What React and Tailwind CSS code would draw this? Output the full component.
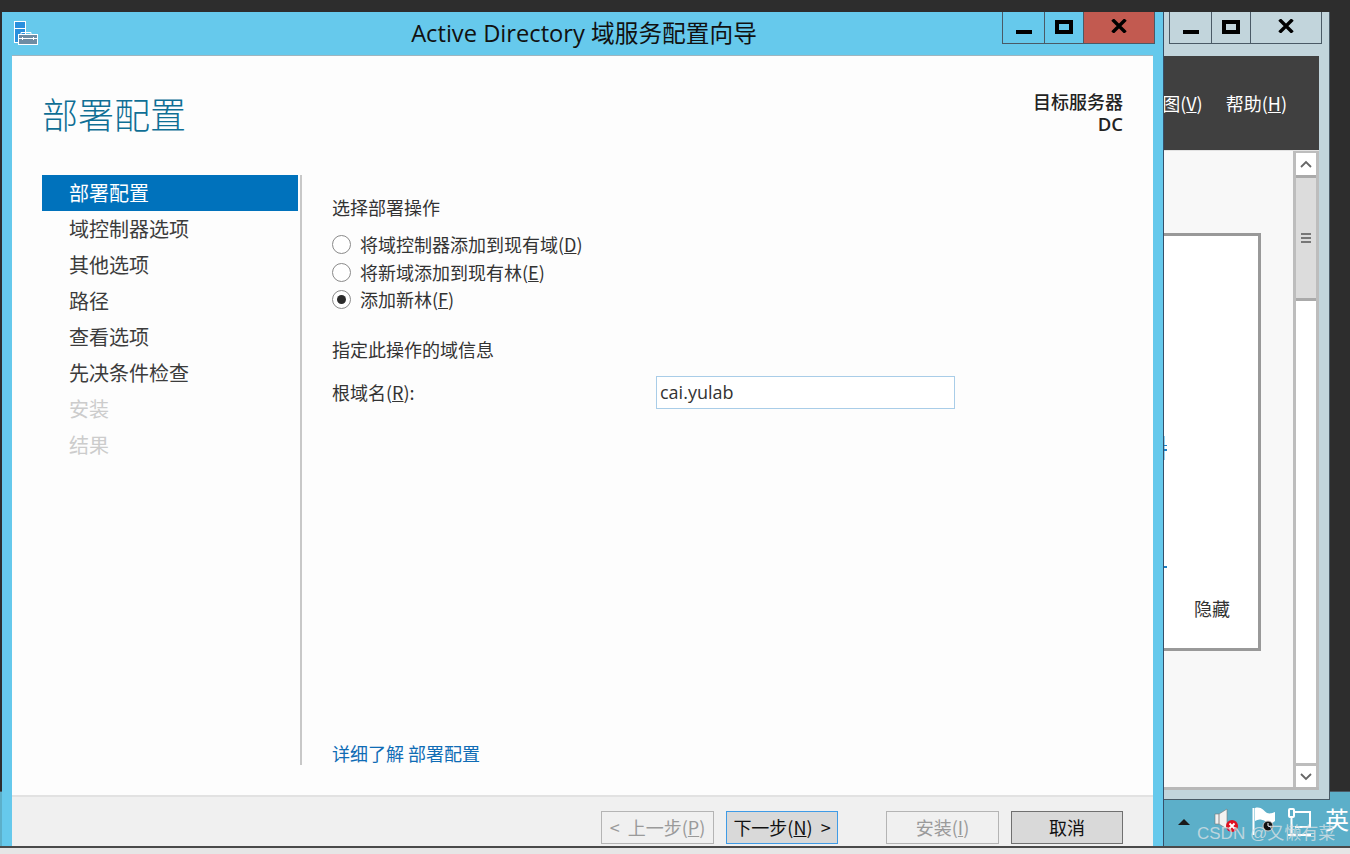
import React from 'react';

const cn = '"Noto Sans CJK SC", "Noto Sans", sans-serif';

const navItems = [
  { name: '部署配置', state: 'active' },
  { name: '域控制器选项' },
  { name: '其他选项' },
  { name: '路径' },
  { name: '查看选项' },
  { name: '先决条件检查' },
  { name: '安装', state: 'off' },
  { name: '结果', state: 'off' },
];

// Minimise / maximise / close glyphs of the server caption buttons
function CaptionButtons({ closeClass }) {
  return (
    <div className="flex h-[32px] border border-t-0 border-[#4a5a66]">
      <div className="w-[42px] flex items-end justify-center pb-[9px] border-r border-[#4a5a66]">
        <div className="w-[16px] h-[4px] bg-black" />
      </div>
      <div className="w-[39px] flex items-start justify-center pt-[8px] border-r border-[#4a5a66]">
        <div className="w-[18px] h-[14px] border-[4px] border-black" />
      </div>
      <div className={`w-[70px] flex items-center justify-center pb-[3px] ${closeClass}`}>
        <svg width="16" height="14" viewBox="0 0 16 14">
          <path d="M1.5 0.5 L14.5 13.5 M14.5 0.5 L1.5 13.5" stroke="#000" strokeWidth="3.4" />
        </svg>
      </div>
    </div>
  );
}

function Radio({ checked, children }) {
  return (
    <div className="h-[27.5px] flex items-center gap-[9px]">
      <div className="w-[19px] h-[19px] rounded-full border border-[#8a8a8a] bg-white flex items-center justify-center">
        {checked && <div className="w-[9px] h-[9px] rounded-full bg-[#2b2b2b]" />}
      </div>
      <span>{children}</span>
    </div>
  );
}

function WizButton({ children, className }) {
  return (
    <button className={`h-[33px] border flex items-center justify-center text-[18px] whitespace-pre ${className}`}>
      {children}
    </button>
  );
}

export default function App() {
  return (
    <div className="relative w-[1350px] h-[854px] bg-[#2d2d2d] overflow-hidden" style={{ fontFamily: cn }}>
      {/* taskbar behind the windows */}
      <div className="absolute left-0 top-[791px] w-[1350px] h-[56px] bg-[#5cafc9] border-t border-[#4a5a66]">
        <div className="absolute left-[1178px] top-[27px] w-0 h-0 border-l-[6px] border-r-[6px] border-b-[6px] border-l-transparent border-r-transparent border-b-[#1a1a1a]" />
        <svg className="absolute left-[1213px] top-[15px]" width="28" height="28" viewBox="0 0 28 28">
          <path d="M2 7 H6 L14 2 V22 L6 17 H2 Z" fill="#f2f2f2" stroke="#777" strokeWidth="0.6" />
          <path d="M6 7 V17" stroke="#888" strokeWidth="1" />
          <circle cx="19" cy="19" r="6" fill="#e01020" />
          <path d="M16.500 16.500 L21.500 21.500 M21.500 16.500 L16.500 21.500" stroke="#fff" strokeWidth="1.8" />
        </svg>
        <svg className="absolute left-[1251px] top-[14px]" width="28" height="30" viewBox="0 0 28 30">
          <path d="M2.500 2 V29" stroke="#fff" strokeWidth="2" />
          <path d="M4 2 C10 0 13 5 16 7 C19 8 21 7 24 6 V15 C20 19 17 17 14 15 C10 13 7 13 4 15 Z" fill="#fff" />
          <circle cx="17" cy="20" r="5" fill="#111" stroke="#ccc" />
          <path d="M17 17 V20 L20 21" stroke="#fff" strokeWidth="1" fill="none" />
        </svg>
        <svg className="absolute left-[1287px] top-[15px]" width="26" height="30" viewBox="0 0 26 30">
          <rect x="2" y="2" width="5" height="8" rx="1" fill="none" stroke="#fff" strokeWidth="2" />
          <path d="M4.500 10 V26 M1 28 H9" stroke="#fff" strokeWidth="2" />
          <path d="M8 5 H23 V20 H8" fill="none" stroke="#fff" strokeWidth="2" />
          <path d="M11 28 H24" stroke="#fff" strokeWidth="2" />
        </svg>
        <span className="absolute left-[1325px] top-[13px] text-[24px] leading-[28px] text-white">英</span>
      </div>

      {/* back window (server manager) */}
      <div className="absolute left-[1150px] top-[12px] w-[180px] h-[788px] bg-[#c2d5dc] border-r border-b border-[#4a5a66] flex flex-col items-end pr-[10px] pb-[9px]">
        <div className="mr-[-3px]">
          <CaptionButtons closeClass="" />
        </div>
        <div className="mt-[12px] w-full flex-1 flex flex-col pl-[14px]">
          <div className="h-[94px] bg-[#404040] flex items-center justify-end text-[18px] text-white pr-[32px] gap-[23px] whitespace-nowrap">
            <span>视图(<u>V</u>)</span>
            <span>帮助(<u>H</u>)</span>
          </div>
          <div className="flex-1 flex bg-[#f8f8f8] border-t border-[#e2e2e2] border-b-[3px] border-b-[#b8b8b8]">
            <div className="flex-1 pt-[82px]">
              <div className="ml-[-14px] w-[111px] h-[418px] bg-white border-[3px] border-[#999999] border-l-0 flex items-end justify-end pr-[28px] pb-[28px] text-[18px] leading-[24px] text-[#333333] whitespace-nowrap">
                隐藏
              </div>
            </div>
            <div className="w-[26px] flex flex-col border-x-[3px] border-t-2 border-[#bdbdbd] bg-white">
              <div className="h-[25px] flex items-center justify-center border-b-[3px] border-[#aaaaaa]">
                <svg width="12" height="8" viewBox="0 0 12 8"><path d="M1 7 L6 2 L11 7" fill="none" stroke="#666" strokeWidth="1.800" /></svg>
              </div>
              <div className="h-[123px] bg-[#dcdcdc] border-b-[3px] border-[#aaaaaa] flex flex-col items-center justify-center gap-[2px]">
                <div className="w-[10px] h-[2px] bg-[#777]" />
                <div className="w-[10px] h-[2px] bg-[#777]" />
                <div className="w-[10px] h-[2px] bg-[#777]" />
              </div>
              <div className="flex-1" />
              <div className="h-[24px] flex items-center justify-center border-t-[3px] border-[#bdbdbd]">
                <svg width="12" height="8" viewBox="0 0 12 8"><path d="M1 1 L6 6 L11 1" fill="none" stroke="#666" strokeWidth="1.800" /></svg>
              </div>
            </div>
          </div>
        </div>
      </div>

      {/* bits of blue link text that stick out from under the dialog */}
      <div className="absolute left-[1164px] top-[436px] w-[1px] h-[24px] bg-[#8fd0f0]" />
      <div className="absolute left-[1164px] top-[445px] w-[3px] h-[1px] bg-[#1a7fc4]" />
      <div className="absolute left-[1164px] top-[449px] w-[3px] h-[2px] bg-[#1a7fc4]" />
      <div className="absolute left-[1164px] top-[566px] w-[3px] h-[2px] bg-[#1a7fc4]" />

      {/* dialog */}
      <div className="absolute left-[2px] top-[12px] w-[1162px] h-[835px] bg-[#66c9ec] border-r border-[#35506a] flex flex-col">
        <div className="relative h-[43px] shrink-0 flex items-start">
          <svg className="absolute left-[12px] top-[8px]" width="26" height="26" viewBox="0 0 26 26">
            <rect x="0.500" y="1.500" width="11" height="21" fill="#2a90dd" stroke="#fff" />
            <path d="M1 8.500 H11" stroke="#fff" />
            <rect x="4.500" y="14.500" width="19" height="10" fill="#6e8ca3" stroke="#fff" />
            <path d="M7 14 V12.500 H17 V14" fill="none" stroke="#fff" />
            <path d="M5 18.500 H23 M8.500 17 V20 M19.500 17 V20" stroke="#fff" />
          </svg>
          <div className="flex-1 text-center text-[23.7px] leading-[42px] text-[#111] pl-[3px] whitespace-nowrap" style={{ fontFamily: '"Open Sans", "Noto Sans CJK SC", sans-serif' }}>
            Active Directory 域服务配置向导
          </div>
          <div className="absolute right-[8px] top-0">
            <CaptionButtons closeClass="bg-[#c25a50]" />
          </div>
        </div>

        <div className="mx-[10px] flex-1 bg-[#fdfdfd] border-t border-[#9fb5bf] flex flex-col">
          {/* heading */}
          <div className="h-[119px] shrink-0 flex justify-between px-[30px] pt-[34px]">
            <div className="text-[36px] leading-[46px] font-light text-[#0f6f95]">部署配置</div>
            <div className="text-right text-[18px] leading-[22px] font-medium text-[#222]">
              <div>目标服务器</div>
              <div className="font-semibold text-[18.500px] mt-[1px]" style={{ fontFamily: '"Open Sans", sans-serif' }}>DC</div>
            </div>
          </div>

          <div className="flex-1 flex pl-[30px] pb-[30px]">
            {/* steps */}
            <div className="w-[260px] border-r-2 border-[#c8c8c8] text-[20px]">
              {navItems.map((item) => (
                <div
                  key={item.name}
                  className={`h-[36px] leading-[36px] pl-[27px] ${
                    item.state === 'active'
                      ? 'bg-[#0072bc] text-white mr-[2px]'
                      : item.state === 'off'
                      ? 'text-[#cccccc]'
                      : 'text-[#3c3c3c]'
                  }`}
                >
                  {item.name}
                </div>
              ))}
            </div>

            {/* form */}
            <div className="flex-1 flex flex-col pl-[30px] pt-[20px] text-[18px] text-[#333333]">
              <div className="h-[24px] leading-[24px]">选择部署操作</div>
              <div className="mt-[12px]">
                <Radio>将域控制器添加到现有域(<u>D</u>)</Radio>
                <Radio>将新域添加到现有林(<u>E</u>)</Radio>
                <Radio checked>添加新林(<u>F</u>)</Radio>
              </div>
              <div className="mt-[23px] h-[24px] leading-[24px]">指定此操作的域信息</div>
              <div className="mt-[15.500px] flex items-center h-[33px]">
                <span className="w-[324px]">根域名(<u>R</u>):</span>
                <div className="w-[299px] h-[33px] border border-[#a9cde8] bg-white pl-[3px] leading-[31px] text-[18px]" style={{ fontFamily: '"Open Sans", sans-serif' }}>
                  cai.yulab
                </div>
              </div>
              <div className="mt-auto text-[#0f6cb5] leading-[24px]">详细了解 部署配置</div>
            </div>
          </div>

          {/* footer buttons */}
          <div className="h-[52px] shrink-0 bg-[#f0f0f0] border-t-2 border-[#e2e2e2] flex items-start justify-end pt-[14px] pr-[30px]">
            <WizButton className="w-[113px] border-[#b4b4b4] text-[#9a9a9a]">&lt;  上一步(<u>P</u>)</WizButton>
            <WizButton className="w-[112px] ml-[12px] border-[#3f9be6] bg-[#d9d9d9] text-[#111]">下一步(<u>N</u>)  &gt;</WizButton>
            <WizButton className="w-[113px] ml-[48px] border-[#b4b4b4] text-[#9a9a9a]">安装(<u>I</u>)</WizButton>
            <WizButton className="w-[112px] ml-[12px] border-[#707070] bg-[#d9d9d9] text-[#111]">取消</WizButton>
          </div>
        </div>
      </div>

      {/* strip below the desktop */}
      <div className="absolute left-0 top-[846px] w-[1350px] h-[8px] bg-[#e6e6e6] border-t-2 border-[#4a4a4a]" />

      {/* watermark */}
      <div className="absolute left-[1197px] top-[823px] text-[17px] leading-[22px] text-[#d8e0e4]/80 whitespace-nowrap" style={{ fontFamily: '"Liberation Sans", "Noto Sans CJK SC", sans-serif' }}>CSDN @又懒有菜</div>
    </div>
  );
}
